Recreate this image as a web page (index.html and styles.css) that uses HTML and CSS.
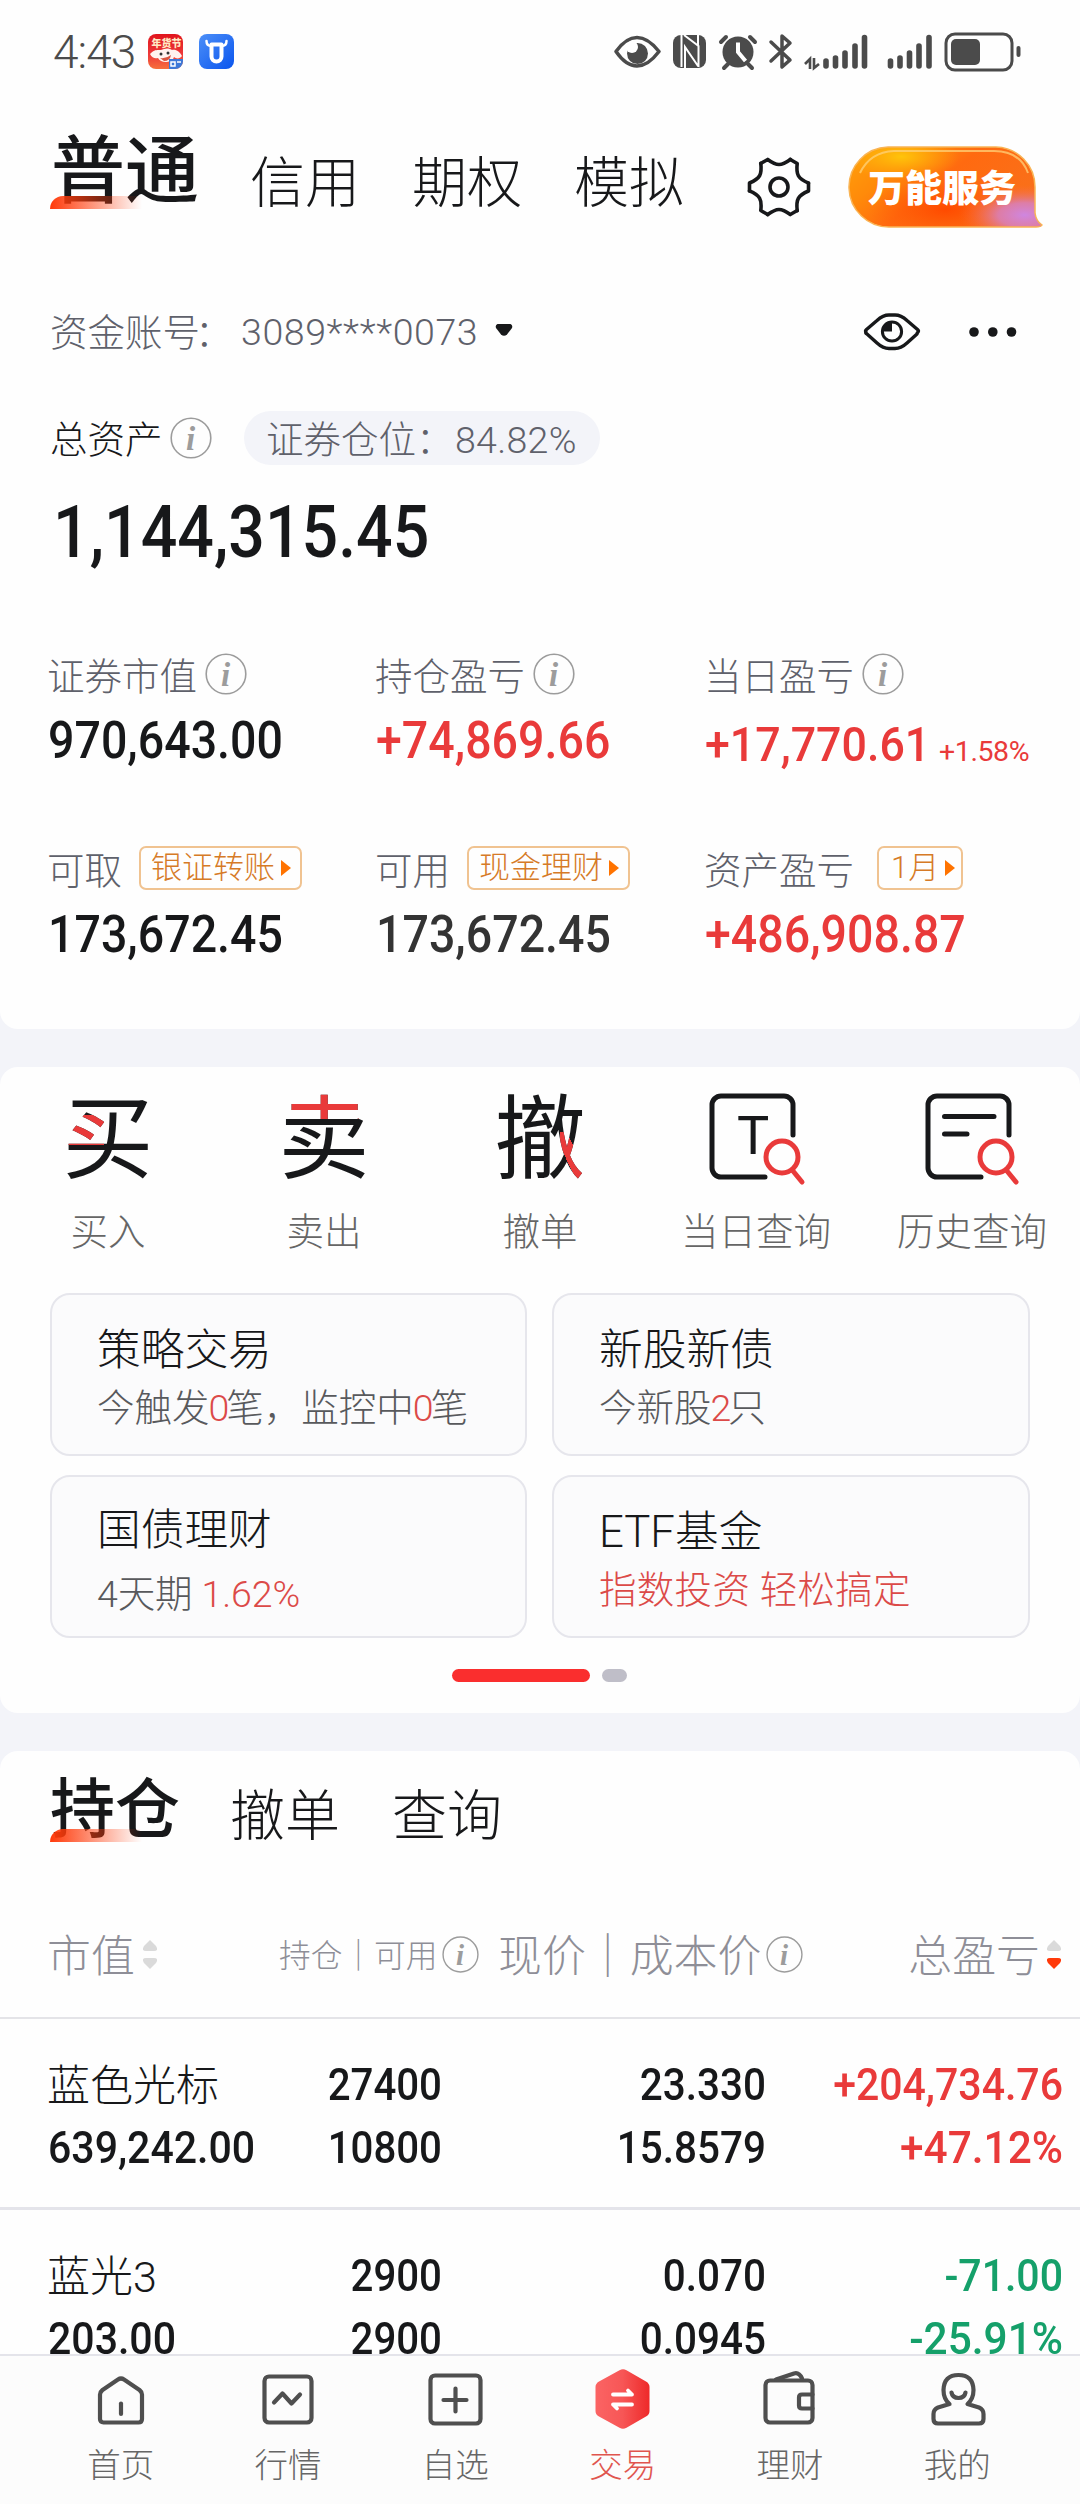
FILE: index.html
```html
<!DOCTYPE html>
<html lang="zh-CN">
<head>
<meta charset="utf-8">
<title>交易</title>
<link rel="stylesheet" href="styles.css">
</head>
<body>
<svg width="0" height="0" class="defs">
  <defs>
    <symbol id="info" viewBox="0 0 42 42">
      <circle cx="21" cy="21" r="19.8" fill="none" stroke="#9c9c9c" stroke-width="1.6"/>
      <text x="20.500" y="33" text-anchor="middle" class="info-i">i</text>
    </symbol>
    <symbol id="magnifier" viewBox="0 0 44 50">
      <circle cx="20" cy="20" r="16" fill="none" stroke="#e93a3a" stroke-width="5"/>
      <path d="M31 34l9 11" stroke="#e93a3a" stroke-width="5" stroke-linecap="round"/>
    </symbol>
  </defs>
</svg>
<main class="screen">
  <div class="content">
    <section class="card card-account">
      <header class="status">
        <span class="clock">4:43</span>
        <svg class="app" width="35" height="35" viewBox="0 0 35 35">
          <defs><linearGradient id="fest" x1="0" y1="0" x2="0" y2="1"><stop offset="0" stop-color="#e0141c"/><stop offset=".6" stop-color="#ee3a3a"/><stop offset="1" stop-color="#f6703c"/></linearGradient></defs>
          <rect width="35" height="35" rx="8" fill="url(#fest)"/>
          <text x="18.500" y="12.500" text-anchor="middle" class="fest-text">年货节</text>
          <path d="M2 20c4-5 8-4 11-4 4-2 8-2 11 0 4-1 8 2 10 6-2 3-6 3-8 1-2 6-13 7-16 1-3 1-6 0-8-4z" fill="#fff3ef"/>
          <circle cx="13" cy="20" r="1.500" fill="#333"/><circle cx="20" cy="19" r="1.500" fill="#333"/>
          <path d="M12 24q6 1 11-3-1 6-7 6z" fill="#d9543f"/>
          <path d="M21 25h14v2a8 8 0 0 1-8 8h-6z" fill="#3c78d8"/>
          <path d="M23 28h4v4h-4zM29 28h4" stroke="#fff" stroke-width="1.500" fill="none"/>
        </svg>
        <svg class="app app-ox" width="35" height="35" viewBox="0 0 35 35">
          <defs><linearGradient id="ox" x1="0" y1="0" x2="1" y2="1"><stop offset="0" stop-color="#4c8ff8"/><stop offset="1" stop-color="#0a55ee"/></linearGradient></defs>
          <rect width="35" height="35" rx="8" fill="url(#ox)"/>
          <path d="M12.500 10.500h10v12a5 5 0 0 1-10 0z" fill="none" stroke="#fff" stroke-width="4" stroke-linejoin="round"/>
          <path d="M7.500 7c0 4 2 5 5 5M27.500 7c0 4-2 5-5 5" fill="none" stroke="#fff" stroke-width="2.500" stroke-linecap="round"/>
        </svg>
        <svg class="sys" width="408" height="40" viewBox="0 0 408 40" fill="none" stroke="#4b4b4b">
          <path d="M2 19.500Q12 5.500 23 5.500T45 19.500Q34 34 23 34T2 19.500z" stroke-width="3.500" stroke-linejoin="round"/>
          <circle cx="23.500" cy="21.500" r="10.500" fill="#4b4b4b" stroke="none"/>
          <circle cx="18" cy="15" r="6" fill="#fff" stroke="none"/>
          <rect x="59" y="3" width="33" height="33" rx="8" fill="#4b4b4b" stroke="none"/>
          <path d="M67.500 3V35M84.500 35V14L70 3M71 36V15L84 34M84 3v10" stroke="#fff" stroke-width="2"/>
          <circle cx="124" cy="20" r="15.500" fill="#4b4b4b" stroke="none"/>
          <path d="M107 10l5-5M141 10l-5-5M110 36l4-4M138 36l-4-4" stroke-width="4" stroke-linecap="round"/>
          <path d="M124 10.500V20l7.500 9" stroke="#fff" stroke-width="4"/>
          <path d="M157 10l19 18-8 7V4l8 7-19 18" stroke-width="3.500" stroke-linejoin="round" stroke-linecap="round"/>
          <path d="M191 32l5-5v10M200 26v10l5-4" stroke-width="2.600"/>
          <g stroke-width="5.600" stroke-linecap="round">
            <path d="M212 29v5M221.500 26v8M231 21v13M241 14v20M250.500 5.500v28.500"/>
            <path d="M276.500 29v5M286 26v8M295.500 21v13M305 14v20M315 5.500v28.500"/>
          </g>
          <rect x="332" y="2" width="66" height="36" rx="9" stroke-width="3"/>
          <rect x="337" y="7" width="29" height="26" rx="5" fill="#4b4b4b" stroke="none"/>
          <path d="M404.500 16v7" stroke-width="4" stroke-linecap="round"/>
        </svg>
      </header>

      <nav class="tabs">
        <a class="tab tab-on">普通</a><a class="tab">信用</a><a class="tab">期权</a><a class="tab">模拟</a>
        <svg class="gear" width="66" height="66" viewBox="-33 -33 66 66" fill="none" stroke="#17181a" stroke-width="3.600" stroke-linejoin="round" stroke-linecap="round">
          <defs><path id="tooth" d="M29.500-4V4C19 8.500 16.900 12.300 18.200 23.600"/></defs>
          <use href="#tooth"/><use href="#tooth" transform="rotate(60)"/><use href="#tooth" transform="rotate(120)"/><use href="#tooth" transform="rotate(180)"/><use href="#tooth" transform="rotate(240)"/><use href="#tooth" transform="rotate(300)"/>
          <circle r="9"/>
        </svg>
        <svg class="service" width="196" height="84" viewBox="0 0 196 84">
          <defs>
            <linearGradient id="sv" x1="0" y1="0" x2="1" y2=".5"><stop offset="0" stop-color="#ffa20a"/><stop offset=".3" stop-color="#ff8a0a"/><stop offset=".55" stop-color="#ff6a10"/><stop offset="1" stop-color="#f9701a"/></linearGradient>
            <radialGradient id="svp" cx=".9" cy=".85" r=".38" gradientTransform="translate(.1 0) scale(.9 1)"><stop offset="0" stop-color="#cf86e0"/><stop offset=".4" stop-color="#d880c0" stop-opacity=".85"/><stop offset="1" stop-color="#ff6a30" stop-opacity="0"/></radialGradient>
            <radialGradient id="svy" cx=".27" cy=".12" r=".3"><stop offset="0" stop-color="#ffc40a"/><stop offset="1" stop-color="#ffb00a" stop-opacity="0"/></radialGradient>
            <radialGradient id="svr" cx=".5" cy=".78" r=".4"><stop offset="0" stop-color="#ff4a00"/><stop offset="1" stop-color="#ff5a00" stop-opacity="0"/></radialGradient>
            <path id="bubble" d="M40 2H148A40 40 0 0 1 187 42V68Q188 76 194 80Q193 82 188 82H42A40 40 0 0 1 40 2z"/>
          </defs>
          <use href="#bubble" fill="url(#sv)"/>
          <use href="#bubble" fill="url(#svr)"/>
          <use href="#bubble" fill="url(#svy)"/>
          <use href="#bubble" fill="url(#svp)" stroke="#f9b455" stroke-width="1.500"/>
          <path d="M12 28Q22 7 46 6H146Q172 6 180 28" fill="none" stroke="#ffd27a" stroke-width="2" opacity=".75"/>
          <text x="20" y="57" textLength="148" lengthAdjust="spacingAndGlyphs" class="service-text">万能服务</text>
        </svg>
      </nav>

      <div class="account">
        <span class="account-label">资金账号<span class="colon">：</span></span><span class="account-no">3089****0073</span>
        <svg class="caret" width="18" height="12" viewBox="0 0 18 12"><path d="M2.500 0h13q2.500 1 1.500 4l-5 6.500q-3 2.500-6 0L1 4q-1-3 1.500-4z" fill="#17181a"/></svg>
        <svg class="eye" width="60" height="42" viewBox="0 0 60 42" fill="none" stroke="#17181a" stroke-width="3.400" stroke-linejoin="round">
          <path d="M4 21Q3 20 4.500 18.500L15 9.500Q21 4 27 4H33Q39 4 45 9.500L55.500 18.500Q57 20 56 21T55 23L45 32Q39 37.500 33 37.500H27Q21 37.500 15 32L5 23Q3 22 4 21z"/>
          <circle cx="30" cy="20.500" r="9.600" stroke-width="3"/><path d="M30 20.500H20.500a9.500 9.500 0 0 1 9.500-9.500z" fill="#17181a" stroke="none"/>
        </svg>
        <svg class="dots" width="50" height="12" viewBox="0 0 50 12" fill="#17181a"><circle cx="6" cy="6" r="4.800"/><circle cx="24.800" cy="6" r="4.800"/><circle cx="43.500" cy="6" r="4.800"/></svg>
      </div>

      <div class="assets">
        <span class="assets-label">总资产</span><svg class="info"><use href="#info"/></svg>
        <span class="pill"><span class="pill-label">证券仓位：</span><span class="pill-num">84.82%</span></span>
      </div>
      <div class="total"><span class="fit">1,144,315.45</span></div>

      <div class="metrics">
        <div><div class="m-label"><span>证券市值</span><svg class="info"><use href="#info"/></svg></div><div class="m-value"><span class="fit">970,643.00</span></div></div>
        <div><div class="m-label"><span>持仓盈亏</span><svg class="info"><use href="#info"/></svg></div><div class="m-value red"><span class="fit">+74,869.66</span></div></div>
        <div><div class="m-label"><span>当日盈亏</span><svg class="info"><use href="#info"/></svg></div><div class="m-value m-day red"><span class="fit day">+17,770.61</span><span class="rate">+1.58%</span></div></div>
      </div>
      <div class="metrics metrics-2">
        <div><div class="m-label"><span>可取</span><span class="tag"><span>银证转账</span><i></i></span></div><div class="m-value"><span class="fit">173,672.45</span></div></div>
        <div><div class="m-label"><span>可用</span><span class="tag"><span>现金理财</span><i></i></span></div><div class="m-value soft"><span class="fit">173,672.45</span></div></div>
        <div><div class="m-label"><span>资产盈亏</span><span class="tag tag-month"><span>1月</span><i></i></span></div><div class="m-value red"><span class="fit">+486,908.87</span></div></div>
      </div>
    </section>

    <section class="card card-trade">
      <div class="actions">
        <a class="action"><span class="ico"><span class="char char-buy">买</span></span><span>买入</span></a>
        <a class="action"><span class="ico"><span class="char char-sell">卖</span></span><span>卖出</span></a>
        <a class="action"><span class="ico"><span class="char char-undo">撤</span></span><span>撤单</span></a>
        <a class="action"><span class="ico"><svg width="100" height="100" viewBox="0 0 100 100" fill="none" stroke="#17181a" stroke-width="5" stroke-linecap="round">
          <path d="M87 45V15a9 9 0 0 0-9-9H15a9 9 0 0 0-9 9V78a9 9 0 0 0 9 9H59"/>
          <text x="47" y="64" text-anchor="middle" class="t-mark">T</text>
          <use href="#magnifier" x="56" y="47" width="44" height="50"/></svg></span><span>当日查询</span></a>
        <a class="action"><span class="ico"><svg width="100" height="100" viewBox="0 0 100 100" fill="none" stroke="#17181a" stroke-width="5" stroke-linecap="round">
          <path d="M87 45V15a9 9 0 0 0-9-9H15a9 9 0 0 0-9 9V78a9 9 0 0 0 9 9H59"/>
          <path d="M22.500 26.500H72M22.500 44H45"/>
          <use href="#magnifier" x="54" y="47" width="44" height="50"/></svg></span><span>历史查询</span></a>
      </div>
      <div class="tiles">
        <a class="tile"><b>策略交易</b><span>今触发<em class="n">0</em>笔，监控中<em class="n">0</em>笔</span></a>
        <a class="tile"><b>新股新债</b><span>今新股<em class="n">2</em>只</span></a>
        <a class="tile tile-bond"><b>国债理财</b><span>4天期 <em>1.62%</em></span></a>
        <a class="tile tile-fund"><b>ETF基金</b><span><em>指数投资 轻松搞定</em></span></a>
      </div>
      <div class="pager"><i class="on"></i><i></i></div>
    </section>

    <section class="card card-hold">
      <nav class="tabs tabs-hold"><a class="tab tab-on">持仓</a><a class="tab">撤单</a><a class="tab">查询</a></nav>
      <div class="thead">
        <span>市值<svg class="sort" width="14" height="30" viewBox="0 0 14 30" fill="#dadada"><path d="M7 0l6 6q3 5-2 5H3q-5 0-2-5z"/><path d="M7 29l6-6q3-5-2-5H3q-5 0-2 5z"/></svg></span>
        <span class="small">持仓｜可用<svg class="info info-s"><use href="#info"/></svg></span>
        <span>现价｜成本价<svg class="info info-s"><use href="#info"/></svg></span>
        <span class="last">总盈亏<svg class="sort" width="14" height="30" viewBox="0 0 14 30" fill="#dadada"><path d="M7 0l6 6q3 5-2 5H3q-5 0-2-5z"/><path d="M7 29l6-6q3-5-2-5H3q-5 0-2 5z" fill="#ff3a0a"/></svg></span>
      </div>
      <div class="trow">
        <span class="name">蓝色光标</span><span class="qty">27400</span><span class="price">23.330</span><span class="gain red">+204,734.76</span>
        <span class="mv">639,242.00</span><span class="qty">10800</span><span class="price">15.8579</span><span class="pct red">+47.12%</span>
      </div>
      <div class="trow">
        <span class="name">蓝光3</span><span class="qty">2900</span><span class="price">0.070</span><span class="gain green">-71.00</span>
        <span class="mv">203.00</span><span class="qty">2900</span><span class="price">0.0945</span><span class="pct green">-25.91%</span>
      </div>
    </section>
  </div>

  <nav class="bottom">
    <a><svg viewBox="0 0 60 60"><path d="M9 25.500Q9 23 11.500 21L27 10.500Q30 8.500 33 10.500L48.500 21Q51 23 51 25.500V50Q51 53.500 47.500 53.500H12.500Q9 53.500 9 50z"/><path d="M30 34.500V45"/></svg><span>首页</span></a>
    <a><svg viewBox="0 0 60 60"><rect x="6.500" y="7.500" width="47" height="46" rx="4.500"/><path d="M16 33.500l8.500-9 9 10 8.500-9"/></svg><span>行情</span></a>
    <a><svg viewBox="0 0 60 60"><rect x="5.500" y="6.500" width="50" height="48" rx="4.500"/><path d="M18.500 31h23M30.500 19.500v23"/></svg><span>自选</span></a>
    <a class="on"><svg viewBox="0 0 60 60"><defs><linearGradient id="hex"><stop offset="0" stop-color="#fb6464"/><stop offset=".5" stop-color="#f75656"/><stop offset="1" stop-color="#ee2a2a"/></linearGradient></defs>
      <path d="M26.500 1.200Q30 -.800 33.500 1.200L53 12.500Q56.500 14.500 56.500 18V42Q56.500 45.500 53 47.500L33.500 58.800Q30 60.800 26.500 58.800L6 47.500Q2.500 45.500 2.500 42V18Q2.500 14.500 6 12.500z" fill="url(#hex)" stroke="none"/>
      <path d="M20 25.500H39L35 21.500M39 35.500H20L24 39.500" stroke="#fff" stroke-width="3.800"/></svg><span>交易</span></a>
    <a><svg viewBox="0 0 60 60"><rect x="5.500" y="11.500" width="47" height="42" rx="4.500"/><path d="M52.500 25.500H42Q39 25.500 39 28.500V36.500Q39 39.500 42 39.500H52.500"/><path d="M16 10.500L34 4.500Q39 3 42 9.500"/></svg><span>理财</span></a>
    <a><svg viewBox="0 0 60 60"><path d="M22.500 35Q16.500 30 16.500 21Q17 6 31.500 6T46.500 21Q46.500 30 40.500 35L52 38.500Q56.500 40.500 56.500 45V50Q56.500 54.500 52 54.500H11Q6.500 54.500 6.500 50V45Q6.500 40.500 11 38.500z"/><path d="M24.500 23.500Q25.500 29 31.500 29T38.500 23.500"/></svg><span>我的</span></a>
  </nav>
</main>
</body>
</html>
```
FILE: styles.css
```css
* { box-sizing: border-box; }
body { margin: 0; }
.defs { position: absolute; }

.screen {
  width: 1080px;
  height: 2504px;
  display: flex;
  flex-direction: column;
  overflow: hidden;
  background: #f3f4f9;
  color: #17181a;
  font-family: Roboto, "Noto Sans CJK SC", sans-serif;
  font-weight: 300;
}
.content { flex: 1; min-height: 0; overflow: hidden; }
.card { background: #fefefe; }
.red { color: #e93a3a; }
.green { color: #15a06a; }

/* condensed figures */
.fit { display: inline-block; transform: scaleX(.895); transform-origin: 0 50%; }

/* status bar */
.status { height: 104px; display: flex; align-items: center; padding: 0 0 0 53px; }
.clock { font-size: 46px; line-height: 60px; color: #4b4b4b; width: 95px; letter-spacing: -1px; }
.app { margin-top: -1px; }
.app-ox { margin-left: 16px; }
.sys { margin-left: 380px; }
.fest-text { font: 900 10px "Noto Sans CJK SC"; fill: #ffe9c4; }

/* tabs */
.card-account { border-radius: 0 0 18px 18px; height: 1029px; }
.tabs { display: flex; align-items: flex-end; padding-left: 52px; height: 126px; }
.tab { position: relative; font-size: 55px; line-height: 60px; margin: 0 52px 17px 0; }
.tab-on { font-size: 74px; line-height: 80px; font-weight: 500; margin: 0 51px 18px -1px; }
.tab-on::after {
  content: "";
  position: absolute;
  left: -1px;
  bottom: 3px;
  width: 92px;
  height: 13px;
  border-top-left-radius: 13px;
  background: linear-gradient(90deg, #ff3a0a, rgba(255, 58, 10, 0));
}
.gear { margin: 0 36px 10px 10px; }
.service { margin-bottom: 1px; }
.service-text { font: 900 37px "Noto Sans CJK SC"; fill: #fff; }

/* account */
.account { display: flex; align-items: center; height: 60px; margin-top: 72px; padding-left: 50px; font-size: 37.500px; color: #5f616b; }
.account-label { width: 191px; margin-top: -5px; }
.colon { margin-left: -5px; }
.account-no { width: 254px; letter-spacing: .6px; }
.caret { margin-top: -5px; }
.eye { margin-left: 349px; }
.dots { margin-left: 46px; }

.info { width: 42px; height: 42px; flex: none; }
.info-s { width: 37px; height: 37px; }
.info-i { font: italic bold 33px "Liberation Serif"; fill: #9c9c9c; }

.assets { display: flex; align-items: center; height: 54px; margin-top: 49px; padding-left: 50px; font-size: 37.500px; line-height: 54px; }
.assets-label { margin: 3px 7px 0 0; width: 113px; }
.pill { display: flex; width: 356px; height: 54px; margin-left: 32px; padding: 2px 0 0 22px; border-radius: 27px; background: #f3f4f9; color: #5f616b; }
.pill-label { width: 189px; }
.pill-num { letter-spacing: .3px; }
.total { margin: 28px 0 0 53px; font-size: 72px; line-height: 80px; font-weight: 500; }

.metrics { display: grid; grid-template-columns: 328px 329px 1fr; padding-left: 48px; margin-top: 80px; }
.m-label { display: flex; align-items: center; height: 42px; font-size: 37.500px; color: #5f616b; }
.m-label > span:first-child { margin: -2px 0 0 -1px; }
.m-label .info { margin-left: 8px; }
.m-value { height: 60px; margin-top: 16px; font-size: 52px; line-height: 60px; font-weight: 500; white-space: nowrap; }
.m-day { display: flex; font-size: 49px; line-height: 67px; }
.day { width: 234px; transform: scaleX(.913); }
.rate { font-size: 28.500px; line-height: 81px; font-weight: 400; letter-spacing: -.4px; }
.soft { color: #333; }
.metrics-2 { margin-top: 75px; }
.metrics-2 .m-label { height: 44px; }
.metrics-2 .m-value { margin-top: 15px; }
.tag { display: flex; align-items: center; width: 163px; height: 44px; margin-left: 17px; padding-left: 10px; border: 2px solid #f0c391; border-radius: 7px; font-size: 31px; line-height: 40px; color: #d67a26; }
.tag i { margin-left: 6px; border: solid transparent; border-width: 8px 0 8px 10px; border-left-color: #ff7300; }
.tag-month { width: 86px; margin-left: 23px; padding-left: 12px; }

/* trade actions */
.card-trade { margin-top: 38px; height: 646px; border-radius: 18px; padding: 23px 50px 0; }
.actions { display: flex; margin: 0 -50px; }
.action { flex: 1; display: flex; flex-direction: column; align-items: center; font-size: 37.500px; line-height: 44px; color: #666; }
.action > span:last-child { margin-top: -1px; }
.ico { display: flex; justify-content: center; width: 100px; height: 100px; margin-bottom: 21px; }
.char { font-size: 91px; line-height: 101px; font-weight: 400; color: transparent; background: #17181a; -webkit-background-clip: text; background-clip: text; }
.char-buy { background: linear-gradient(#e93a3a, #e93a3a) 0 25px / 42px 30px no-repeat, #17181a; -webkit-background-clip: text; background-clip: text; }
.char-sell { background: linear-gradient(#e93a3a, #e93a3a) 0 0 / 100% 29px no-repeat, #17181a; -webkit-background-clip: text; background-clip: text; }
.char-undo { background: linear-gradient(to top right, transparent 36%, #e93a3a 36%, #e93a3a 64%, transparent 64%) 66px 42px / 24px 50px no-repeat, #17181a; -webkit-background-clip: text; background-clip: text; }
.t-mark { font: 400 54px Roboto; fill: #17181a; stroke: none; }

.tiles { display: grid; grid-template-columns: 477px 478px; gap: 19px 25px; margin-top: 39px; }
.tile { display: flex; flex-direction: column; height: 163px; padding: 30px 0 0 45px; border: 2px solid #e6e6ec; border-radius: 20px; background: #fbfbfc; }
.tile b { font-size: 43.700px; line-height: 50px; font-weight: 300; }
.tile span { margin-top: 11px; font-size: 37.500px; line-height: 44px; color: #58595c; white-space: pre; }
.tile em { font-style: normal; color: #dc4a48; }
.tile .n { margin: 0 -1px; letter-spacing: -2px; }
.tile-bond { padding-top: 28px; }
.tile-bond span { margin-top: 17px; letter-spacing: -.1px; }
.tile-fund span { letter-spacing: .3px; }
.pager { display: flex; gap: 12px; margin: 31px 0 0 402px; }
.pager i { width: 25px; height: 13px; border-radius: 7px; background: #bfbec8; }
.pager .on { width: 138px; background: #fa2e2e; }

/* holdings */
.card-hold { margin-top: 38px; border-radius: 18px 18px 0 0; }
.tabs-hold { height: 94px; padding-left: 50px; }
.tabs-hold .tab { margin-bottom: -1px; }
.tabs-hold .tab-on { font-size: 65px; line-height: 70px; margin: 0 50px 0 0; }
.tabs-hold .tab-on::after { left: 0; }
.thead { display: grid; grid-template-columns: 231px 220px 1fr 190px; height: 174px; padding: 87px 19px 0 48px; border-bottom: 2px solid #e4e4e8; font-size: 43.900px; line-height: 50px; color: #8e8e97; }
.thead span { display: flex; align-items: center; height: 50px; white-space: nowrap; margin-left: -1px; }
.thead .small { font-size: 31.700px; margin-left: 0; }
.thead .last { justify-content: flex-end; }
.thead .info { margin: -5px 0 0 5px; }
.sort { margin: -5px 0 0 8px; }
.last .sort { margin-left: 7px; }
.trow { display: grid; grid-template-columns: 210px 184px 324px 297px; row-gap: 13px; padding: 42px 0 33px 48px; border-bottom: 3px solid #e4e4ea; font-size: 43.500px; line-height: 50px; font-weight: 500; text-align: right; }
.trow > span { transform-origin: 100% 50%; }
.trow .name { text-align: left; font-size: 43px; font-weight: 300; margin-left: -1px; }
.trow .mv { text-align: left; transform: scaleX(.943); transform-origin: 0 50%; }
.qty { transform: scaleX(.925); }
.price { transform: scaleX(.93); }
.gain { transform: scaleX(.943); }
.pct { transform: scaleX(.975); }

/* bottom bar */
.bottom { flex: none; display: flex; height: 150px; padding: 13px 39px 0 37px; border-top: 2px solid #e4e4ea; background: #fcfcfc; }
.bottom a { flex: 1; display: flex; flex-direction: column; align-items: center; font-size: 33.500px; line-height: 40px; color: #666; }
.bottom svg { width: 60px; height: 60px; margin-bottom: 17px; fill: none; stroke: #4f4f4f; stroke-width: 4.200; stroke-linecap: round; stroke-linejoin: round; }
.bottom .on { color: #e0554e; }
```
